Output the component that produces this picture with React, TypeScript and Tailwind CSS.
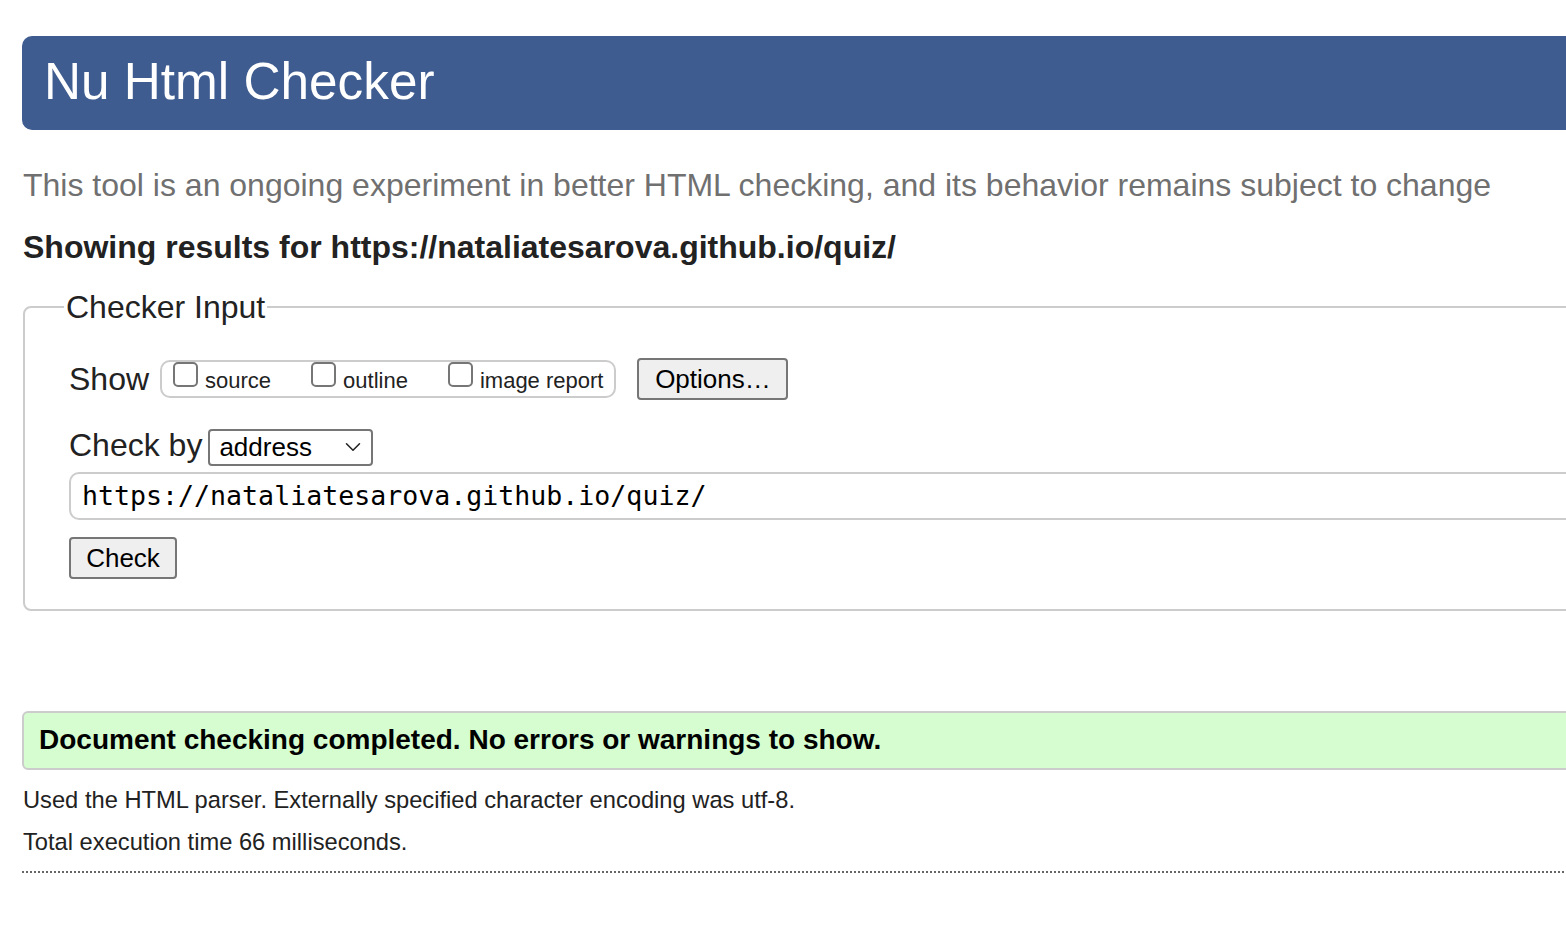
import { ChevronDown } from 'lucide-react';

export default function App() {
  const options = ['source', 'outline', 'image report'];

  return (
    <div className="w-full h-screen overflow-hidden bg-white">
      <div className="w-[1640px] pl-[22px] pt-[36px] font-['Liberation_Sans',Arial,sans-serif] text-[#222]">
        {/* Title bar */}
        <h1 className="h-[94px] bg-[#3e5c8f] rounded-[10px] pl-[22px] pb-[2px] flex items-center text-[51.3px] leading-none text-white">
          Nu Html Checker
        </h1>

        <p className="mt-[35px] pl-[1px] text-[32px] leading-[40px] text-[#707070]">
          This tool is an ongoing experiment in better HTML checking, and its behavior remains subject to change
        </p>

        <p className="mt-[22px] pl-[1px] text-[32px] leading-[40px] font-bold">
          Showing results for https://nataliatesarova.github.io/quiz/
        </p>

        {/* Checker input */}
        <fieldset className="mt-[22px] ml-[1px] border-2 border-[#ccc] rounded-[8px] pl-[44px] pt-[33px] pb-[30px]">
          <legend className="ml-[-5px] px-[2px] text-[32px] leading-[36px]">Checker Input</legend>

          <div className="flex items-center h-[42px]">
            <span className="text-[32px] leading-[36px]">Show</span>
            <div className="ml-[11px] h-[38px] border-2 border-[#ccc] rounded-[10px] flex items-start pl-[11px] pr-[11px] gap-[40px]">
              {options.map((o) => (
                <label key={o} className="flex items-start gap-[7px]">
                  <span className="w-[25px] h-[25px] border-2 border-[#767676] rounded-[5px] bg-white" />
                  <span className="mt-[6px] text-[22px] leading-[25px]">{o}</span>
                </label>
              ))}
            </div>
            <button className="ml-[21px] h-[42px] w-[151px] bg-[#efefef] border-2 border-[#767676] rounded-[4px] text-[26px] leading-none text-black">
              Options…
            </button>
          </div>

          <div className="mt-[27px] flex items-baseline gap-[6px]">
            <span className="text-[32px] leading-[36px]">Check by</span>
            <div className="w-[165px] h-[37px] border-2 border-[#767676] rounded-[4px] bg-white flex items-center justify-between pl-[9px] pr-[5px]">
              <span className="text-[26px] leading-[30px] text-black">address</span>
              <ChevronDown className="w-[26px] h-[26px] text-[#222]" strokeWidth={1.4} />
            </div>
          </div>

          <div className="mt-[6px] h-[48px] border-2 border-[#ccc] rounded-[10px] flex items-center pl-[11px] font-['DejaVu_Sans_Mono',monospace] text-[26.6px] text-black">
            https://nataliatesarova.github.io/quiz/
          </div>

          <button className="mt-[17px] h-[42px] w-[108px] bg-[#efefef] border-2 border-[#767676] rounded-[4px] text-[26px] leading-none text-black">
            Check
          </button>
        </fieldset>

        {/* Result */}
        <div className="mt-[100px] h-[59px] bg-[#d5fdd0] border-2 border-[#ccc] rounded-[6px] flex items-center pl-[15px] text-[28px] font-bold text-black">
          Document checking completed. No errors or warnings to show.
        </div>

        <p className="mt-[9px] pl-[1px] text-[23.7px] leading-[42px]">
          Used the HTML parser. Externally specified character encoding was utf-8.
        </p>
        <p className="pl-[1px] text-[23.7px] leading-[42px]">Total execution time 66 milliseconds.</p>

        <div className="mt-[8px] border-t-2 border-dotted border-[#666]" />
      </div>
    </div>
  );
}
